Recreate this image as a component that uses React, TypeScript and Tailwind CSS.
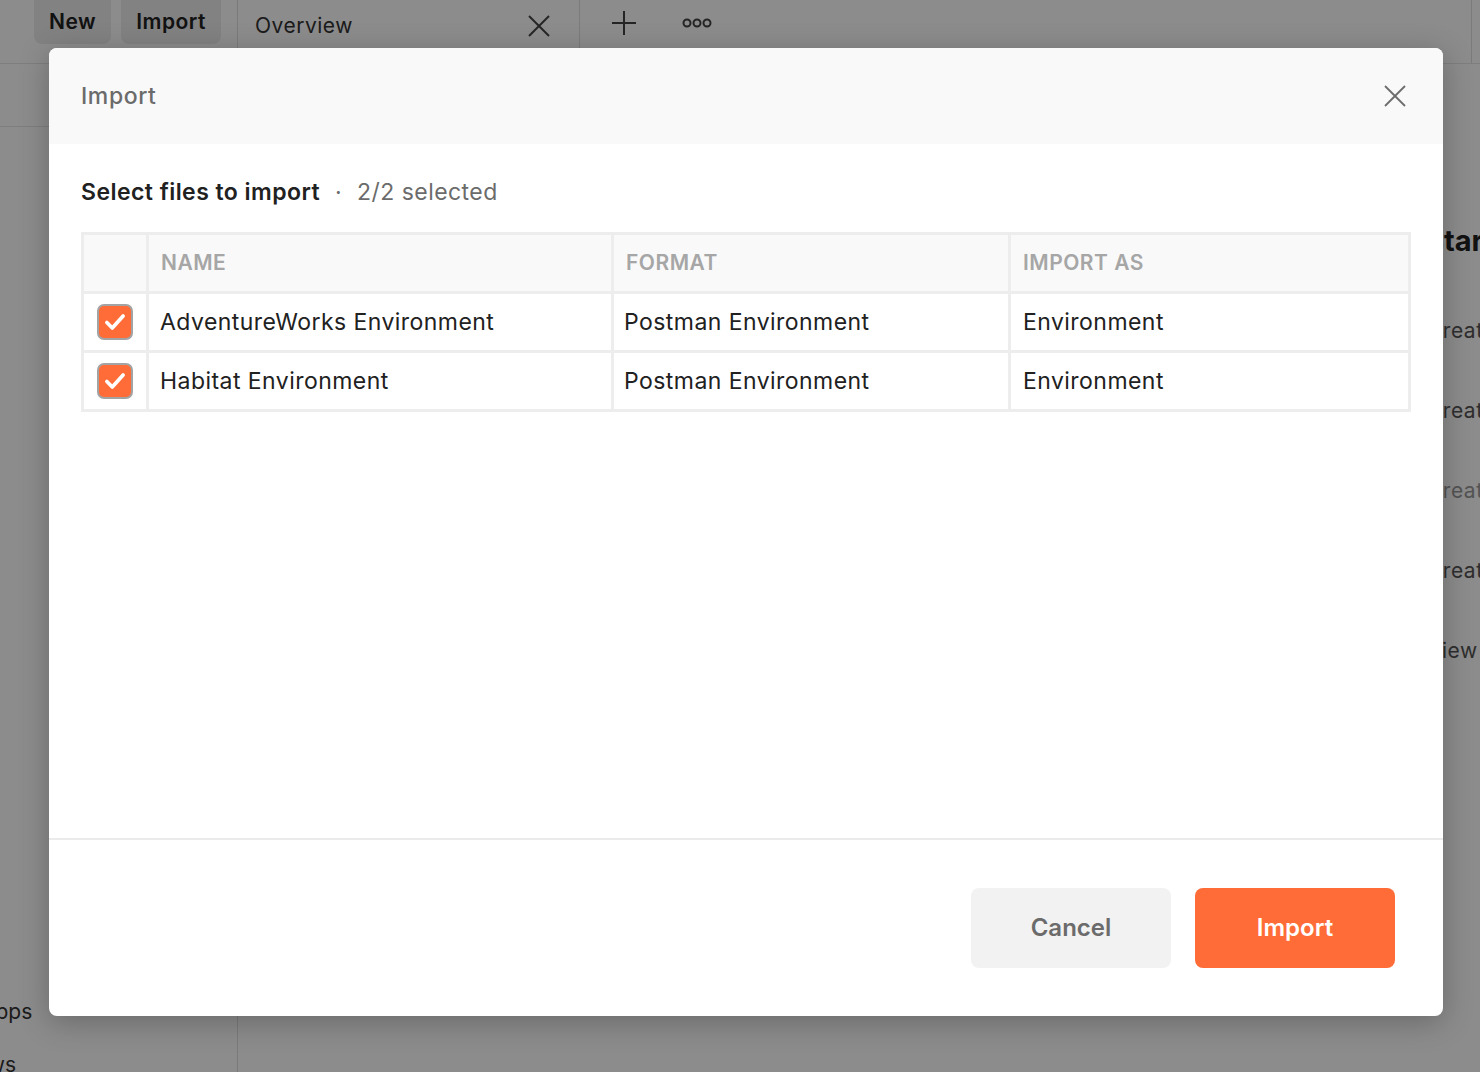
import { useState } from 'react';

const files = [
  { name: 'AdventureWorks Environment', format: 'Postman Environment', importAs: 'Environment' },
  { name: 'Habitat Environment', format: 'Postman Environment', importAs: 'Environment' },
];

function CheckBox({ checked, onToggle }: { checked: boolean; onToggle: () => void }) {
  return (
    <button
      onClick={onToggle}
      className={`w-[36px] h-[36px] rounded-[7px] border-2 border-[#a3a3a3] flex items-center justify-center ${
        checked ? 'bg-[#ff6c37]' : 'bg-white'
      }`}
    >
      {checked && (
        <svg width="26" height="26" viewBox="0 0 24 24" fill="none">
          <polyline points="4.5,12.5 9.5,17.5 19.5,6.5" stroke="white" strokeWidth="3.4" strokeLinecap="round" strokeLinejoin="round" />
        </svg>
      )}
    </button>
  );
}

function XIcon({ size, color, width = 2 }: { size: number; color: string; width?: number }) {
  return (
    <svg width={size} height={size} viewBox="0 0 24 24" fill="none">
      <line x1="2" y1="2" x2="22" y2="22" stroke={color} strokeWidth={width} />
      <line x1="22" y1="2" x2="2" y2="22" stroke={color} strokeWidth={width} />
    </svg>
  );
}

export default function App() {
  const [selected, setSelected] = useState([true, true]);
  const count = selected.filter(Boolean).length;

  return (
    <div className="relative w-[1480px] h-[1072px] overflow-hidden bg-white font-['Inter','Liberation_Sans',sans-serif]">
      {/* BACKGROUND APP */}
      <div className="flex flex-col h-full">
        <div className="h-[64px] flex border-b border-[#e6e6e6] shrink-0">
          <div className="w-[238px] flex items-start gap-[10px] pl-[34px] border-r border-[#e0e0e0]">
            <div className="h-[44px] px-[15px] rounded-b-[8px] bg-[#ededed] flex items-center text-[21px] font-semibold tracking-[0.5px] text-[#212121]">New</div>
            <div className="h-[44px] px-[15px] rounded-b-[8px] bg-[#ededed] flex items-center text-[21px] font-semibold tracking-[0.5px] text-[#212121]">Import</div>
          </div>
          <div className="w-[342px] flex items-start justify-between pl-[17px] pr-[28px] pt-[10px] border-r border-[#e0e0e0]">
            <span className="text-[21px] tracking-[0.5px] text-[#333]">Overview</span>
            <div className="pt-[4px]">
              <XIcon size={24} color="#444" width={2} />
            </div>
          </div>
          <div className="flex items-start gap-[46px] pl-[32px] pt-[11px]">
            <svg width="24" height="24" viewBox="0 0 24 24" fill="none">
              <line x1="12" y1="0" x2="12" y2="24" stroke="#444" strokeWidth="2" />
              <line x1="0" y1="12" x2="24" y2="12" stroke="#444" strokeWidth="2" />
            </svg>
            <svg width="30" height="24" viewBox="0 0 30 24" fill="none">
              <circle cx="5" cy="12" r="3.5" stroke="#444" strokeWidth="2" />
              <circle cx="15" cy="12" r="3.5" stroke="#444" strokeWidth="2" />
              <circle cx="25" cy="12" r="3.5" stroke="#444" strokeWidth="2" />
            </svg>
          </div>
          <div className="flex-1" />
          <div className="w-[9px] border-l border-[#e0e0e0]" />
        </div>
        <div className="flex flex-1">
          <div className="w-[238px] border-r border-[#e0e0e0] flex flex-col">
            <div className="h-[63px] border-b border-[#e6e6e6]" />
            <div className="flex-1" />
            <div className="ml-[-19px] text-[21px] text-[#333] leading-[30px]">Apps</div>
            <div className="ml-[-42px] mt-[23px] text-[21px] text-[#333] leading-[30px] h-[22px]">Flows</div>
          </div>
          <div className="flex-1 flex justify-end">
            <div className="w-[53px] flex flex-col pt-[157px]">
              <div className="ml-[-2px] text-[29px] font-bold text-[#212121] leading-[40px] whitespace-nowrap">Start</div>
              <div className="mt-[55px] flex flex-col gap-[50px] text-[21px] leading-[30px] tracking-[0.5px] text-[#555] whitespace-nowrap">
                <span>Create</span>
                <span>Create</span>
                <span className="text-[#999]">Create</span>
                <span>Create</span>
                <span>View</span>
              </div>
            </div>
          </div>
        </div>
      </div>

      {/* OVERLAY */}
      <div className="absolute inset-0 bg-black/45" />

      {/* MODAL */}
      <div className="absolute left-[49px] top-[48px] w-[1394px] h-[968px] bg-white rounded-[8px] shadow-[0_6px_30px_rgba(0,0,0,0.25)] flex flex-col overflow-hidden">
        <div className="h-[96px] bg-[#f9f9f9] flex items-center justify-between pl-[32px] pr-[36px] shrink-0">
          <h2 className="text-[23px] font-medium tracking-[0.6px] text-[#6b6b6b]">Import</h2>
          <button>
            <XIcon size={24} color="#6b6b6b" width={1.8} />
          </button>
        </div>

        <div className="flex-1 px-[32px] pt-[32px]">
          <div className="flex items-center h-[32px] text-[23px] tracking-[0.45px] mb-[24px]">
            <span className="font-semibold text-[#212121]">Select files to import</span>
            <span className="mx-[15px] text-[#6b6b6b]">·</span>
            <span className="text-[#6b6b6b]">{count}/2 selected</span>
          </div>

          <div className="grid grid-cols-[62px_462px_394px_397px] auto-rows-[56px] gap-[3px] p-[3px] bg-[#ededed] w-[1330px]">
            <div className="bg-[#f9f9f9]" />
            <div className="bg-[#f9f9f9] flex items-center pl-[12px] text-[21px] font-semibold tracking-[0.5px] text-[#a6a6a6]">NAME</div>
            <div className="bg-[#f9f9f9] flex items-center pl-[12px] text-[21px] font-semibold tracking-[0.5px] text-[#a6a6a6]">FORMAT</div>
            <div className="bg-[#f9f9f9] flex items-center pl-[12px] text-[21px] font-semibold tracking-[0.5px] text-[#a6a6a6]">IMPORT AS</div>
            {files.map((file, index) => (
              <div key={index} className="contents">
                <div className="bg-white flex items-center justify-center">
                  <CheckBox
                    checked={selected[index]}
                    onToggle={() => setSelected(selected.map((s, i) => (i === index ? !s : s)))}
                  />
                </div>
                <div className="bg-white flex items-center pl-[11px] text-[23px] tracking-[0.45px] text-[#212121]">{file.name}</div>
                <div className="bg-white flex items-center pl-[10px] text-[23px] tracking-[0.45px] text-[#212121]">{file.format}</div>
                <div className="bg-white flex items-center pl-[12px] text-[23px] tracking-[0.45px] text-[#212121]">{file.importAs}</div>
              </div>
            ))}
          </div>
        </div>

        <div className="border-t-2 border-[#ebebeb] flex justify-end gap-[24px] pt-[48px] pb-[48px] pr-[48px] shrink-0">
          <button className="w-[200px] h-[80px] rounded-[8px] bg-[#f2f2f2] text-[24px] font-semibold text-[#6b6b6b]">Cancel</button>
          <button className="w-[200px] h-[80px] rounded-[8px] bg-[#ff6c37] text-[24px] font-semibold text-white">Import</button>
        </div>
      </div>
    </div>
  );
}
